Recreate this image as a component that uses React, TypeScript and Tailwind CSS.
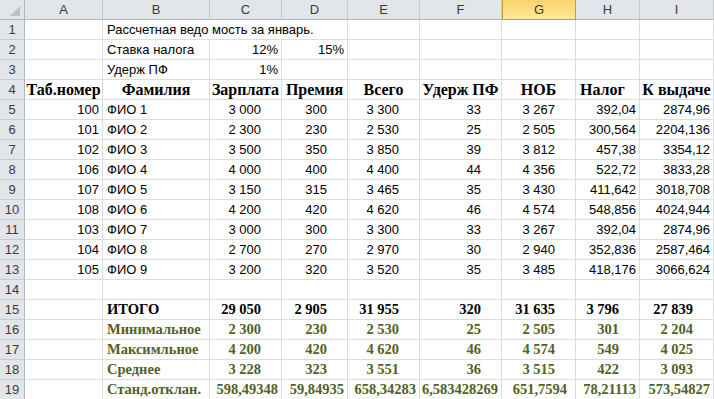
type Cell = {
    t: string;
    a?: 'l' | 'c' | 'r' | 'p' | 'm';
    k?: 's' | 'h' | 'b' | 'g';
    span?: boolean;
} | null;

const ALIGN = {
    l: 'justify-start pl-[4px]',
    c: 'justify-center',
    r: 'justify-end pr-[3px]',
    m: 'justify-end pr-[8px]',
    p: 'justify-end pr-[20px]',
};

const KIND = {
    s: "font-['Liberation_Sans',sans-serif] text-[13px] text-black",
    h: "font-['Liberation_Serif',serif] font-bold text-[16px] text-black",
    b: "font-['Liberation_Serif',serif] font-bold text-[14.5px] text-black",
    g: "font-['Liberation_Serif',serif] font-bold text-[14.5px] text-[#4f6228]",
};

const COLS = ['A', 'B', 'C', 'D', 'E', 'F', 'G', 'H', 'I'];

// data rows 5-13
const people: string[][] = [
    ['100', 'ФИО 1', '3 000', '300', '3 300', '33', '3 267', '392,04', '2874,96'],
    ['101', 'ФИО 2', '2 300', '230', '2 530', '25', '2 505', '300,564', '2204,136'],
    ['102', 'ФИО 3', '3 500', '350', '3 850', '39', '3 812', '457,38', '3354,12'],
    ['106', 'ФИО 4', '4 000', '400', '4 400', '44', '4 356', '522,72', '3833,28'],
    ['107', 'ФИО 5', '3 150', '315', '3 465', '35', '3 430', '411,642', '3018,708'],
    ['108', 'ФИО 6', '4 200', '420', '4 620', '46', '4 574', '548,856', '4024,944'],
    ['103', 'ФИО 7', '3 000', '300', '3 300', '33', '3 267', '392,04', '2874,96'],
    ['104', 'ФИО 8', '2 700', '270', '2 970', '30', '2 940', '352,836', '2587,464'],
    ['105', 'ФИО 9', '3 200', '320', '3 520', '35', '3 485', '418,176', '3066,624'],
];

const dataRow = (v: string[]): Cell[] => [
    { t: v[0], a: 'r' },
    { t: v[1], a: 'l' },
    { t: v[2], a: 'p' },
    { t: v[3], a: 'p' },
    { t: v[4], a: 'p' },
    { t: v[5], a: 'p' },
    { t: v[6], a: 'p' },
    { t: v[7], a: 'r' },
    { t: v[8], a: 'r' },
];

// totals and stats: integers carry the trailing-space number format
const summaryRow = (label: string, k: 'b' | 'g', v: string[]): Cell[] => [
    null,
    { t: label, a: 'l', k },
    ...v.map((t): Cell => ({ t, a: 'p', k })),
];

const rows: Cell[][] = [
    [null, { t: 'Рассчетная ведо мость за январь.', a: 'l', span: true }, null, null, null, null, null],
    [null, { t: 'Ставка налога', a: 'l' }, { t: '12%', a: 'r' }, { t: '15%', a: 'r' }, null, null, null, null, null],
    [null, { t: 'Удерж ПФ', a: 'l' }, { t: '1%', a: 'r' }, null, null, null, null, null, null],
    [
        { t: 'Таб.номер', a: 'c', k: 'h' },
        { t: 'Фамилия', a: 'c', k: 'h' },
        { t: 'Зарплата', a: 'c', k: 'h' },
        { t: 'Премия', a: 'c', k: 'h' },
        { t: 'Всего', a: 'c', k: 'h' },
        { t: 'Удерж ПФ', a: 'c', k: 'h' },
        { t: 'НОБ', a: 'c', k: 'h' },
        { t: 'Налог', a: 'l', k: 'h' },
        { t: 'К выдаче', a: 'c', k: 'h' },
    ],
    ...people.map(dataRow),
    [null, null, null, null, null, null, null, null, null],
    summaryRow('ИТОГО', 'b', ['29 050', '2 905', '31 955', '320', '31 635', '3 796', '27 839']),
    summaryRow('Минимальное', 'g', ['2 300', '230', '2 530', '25', '2 505', '301', '2 204']),
    summaryRow('Максимльное', 'g', ['4 200', '420', '4 620', '46', '4 574', '549', '4 025']),
    summaryRow('Среднее', 'g', ['3 228', '323', '3 551', '36', '3 515', '422', '3 093']),
    [
        null,
        { t: 'Станд.отклан.', a: 'l', k: 'g' },
        { t: '598,49348', a: 'r', k: 'g' },
        { t: '59,84935', a: 'r', k: 'g' },
        { t: '658,34283', a: 'r', k: 'g' },
        { t: '6,583428269', a: 'r', k: 'g' },
        { t: '651,7594', a: 'm', k: 'g' },
        { t: '78,21113', a: 'r', k: 'g' },
        { t: '573,54827', a: 'r', k: 'g' },
    ],
];

const headText = "font-['Liberation_Sans',sans-serif] text-[13px] text-[#3b3b3b]";

function GridCell({ c }: { c: Cell }) {
    if (!c) return <div className="h-[20px] border-r border-b border-[#dadcdd]" />;
    return (
        <div
            className={`h-[20px] border-r border-b border-[#dadcdd] flex items-center whitespace-nowrap leading-[19px] ${ALIGN[c.a ?? 'l']} ${KIND[c.k ?? 's']} ${c.span ? 'col-span-3' : ''}`}
        >
            {c.t}
        </div>
    );
}

export default function App() {
    return (
        <div className="w-full h-[399px] overflow-hidden bg-white">
            <div className="grid grid-cols-[25px_78px_107px_72px_66px_72px_82px_74px_64px_1fr]">
                {/* column headers */}
                <div className="h-[20px] bg-[#e2e5ea] border-r border-b border-[#b1b7bf] relative">
                    <svg className="absolute right-[4px] bottom-[3px]" width="10" height="10" viewBox="0 0 10 10">
                        <path d="M10 0 L10 10 L0 10 Z" fill="#bcc1c8" />
                    </svg>
                </div>
                {COLS.map((l) =>
                    l === 'G' ? (
                        <div
                            key={l}
                            className={`h-[20px] flex items-center justify-center bg-gradient-to-b from-[#f8d36c] to-[#fde996] border-x border-b border-[#c99a3c] ${headText}`}
                        >
                            {l}
                        </div>
                    ) : (
                        <div
                            key={l}
                            className={`h-[20px] flex items-center justify-center bg-[#e2e5ea] border-r border-b border-r-[#c6cad0] border-b-[#b1b7bf] ${headText}`}
                        >
                            {l}
                        </div>
                    )
                )}

                {rows.map((r, i) => (
                    <div key={i} className="contents">
                        <div
                            className={`h-[20px] flex items-center justify-center bg-[#e2e5ea] border-r border-b border-r-[#b1b7bf] border-b-[#c6cad0] ${headText}`}
                        >
                            {i + 1}
                        </div>
                        {r.map((c, j) => (
                            <GridCell key={j} c={c} />
                        ))}
                    </div>
                ))}
            </div>
        </div>
    );
}
